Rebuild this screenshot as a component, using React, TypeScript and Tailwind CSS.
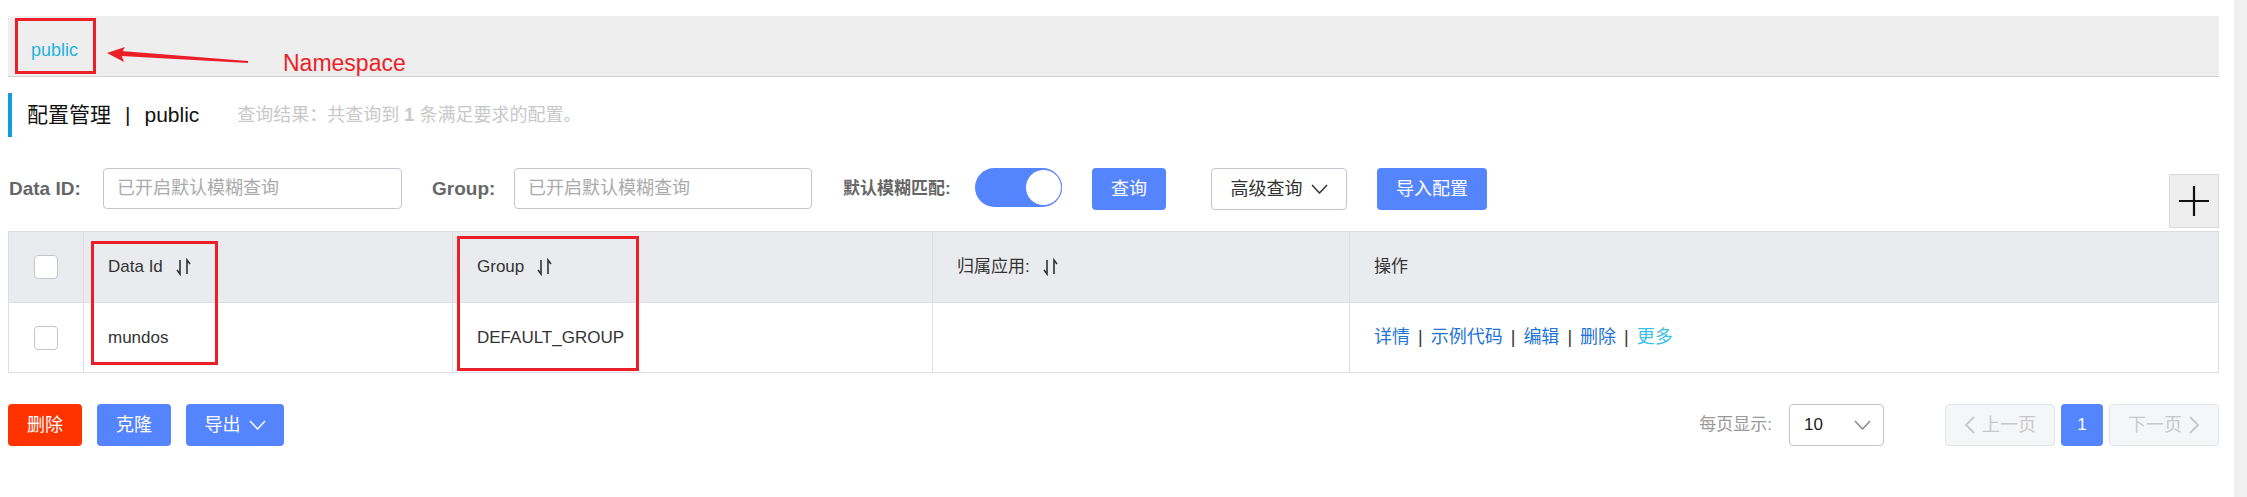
import React from "react";

function SortIcon() {
  return (
    <svg width="17" height="18" viewBox="0 0 17 18" className="ml-[12px] text-[#333]">
      <path d="M5 2 V16 L2 12" fill="none" stroke="currentColor" strokeWidth="1.6" />
      <path d="M12 16 V2 L15 6" fill="none" stroke="currentColor" strokeWidth="1.6" />
    </svg>
  );
}

function Chevron({ color, size = 17 }: { color: string; size?: number }) {
  return (
    <svg width={size} height="10" viewBox="0 0 17 10">
      <polyline points="1,1 8.5,9 16,1" fill="none" stroke={color} strokeWidth="1.5" />
    </svg>
  );
}

function Checkbox() {
  return <div className="w-[24px] h-[24px] rounded-[4px] border border-[#c4c6cf] bg-white" />;
}

export default function App() {
  const actions = [
    { label: "详情", color: "text-[#2374d6]" },
    { label: "示例代码", color: "text-[#2374d6]" },
    { label: "编辑", color: "text-[#2374d6]" },
    { label: "删除", color: "text-[#2374d6]" },
    { label: "更多", color: "text-[#3bbfe6]" },
  ];

  return (
    <div className="flex h-[497px] w-full bg-white font-['Liberation_Sans','Noto_Sans_CJK_SC',sans-serif] text-[#333] overflow-hidden">
      <div className="relative flex-1 flex flex-col pl-[8px] pr-[15px]">
        {/* namespace bar */}
        <div className="relative mt-[16px] h-[61px] bg-[#eeeeee] border-b border-[#cfcfcf] flex items-center pl-[23px] pt-[8px]">
          <span className="text-[18px] text-[#22b2dc]">public</span>
          <div className="absolute left-[7px] top-[2px] w-[81px] h-[56px] border-[3px] border-[#ea1f28]" />
          <svg className="absolute left-[92px] top-[24px]" width="160" height="30" viewBox="0 0 160 30">
            <polygon points="21,11 148,21 148,23 21,16" fill="#ea1f28" />
            <polygon points="7,13 25,7 21,14 24,22" fill="#ea1f28" />
          </svg>
          <span className="absolute left-[275px] top-[36px] text-[23px] leading-[23px] text-[#ea1f28]">Namespace</span>
        </div>

        {/* title */}
        <div className="mt-[16px] h-[44px] border-l-[4px] border-[#0e9fd6] flex items-center pl-[15px]">
          <span className="text-[21px] text-[#111]">配置管理</span>
          <span className="text-[21px] text-[#111] mx-[14px]">|</span>
          <span className="text-[21px] text-[#111]">public</span>
          <span className="ml-[38px] text-[18px] text-[#c8c8c8]">
            查询结果：共查询到 <b>1</b> 条满足要求的配置。
          </span>
        </div>

        {/* filters */}
        <div className="mt-[31px] flex items-start">
          <div className="h-[42px] flex items-center w-[95px] pl-[1px] text-[19px] font-bold text-[#666]">Data ID:</div>
          <input
            className="h-[41px] w-[299px] rounded-[4px] border border-[#c4c6cf] pl-[13px] text-[18px] outline-none placeholder:text-[#aaa]"
            placeholder="已开启默认模糊查询"
          />
          <div className="ml-[30px] h-[42px] flex items-center w-[82px] text-[19px] font-bold text-[#666]">Group:</div>
          <input
            className="h-[41px] w-[298px] rounded-[4px] border border-[#c4c6cf] pl-[13px] text-[18px] outline-none placeholder:text-[#aaa]"
            placeholder="已开启默认模糊查询"
          />
          <div className="ml-[31px] h-[42px] flex items-center w-[132px] text-[17px] font-bold text-[#666]">默认模糊匹配:</div>
          <div className="h-[39px] w-[87px] rounded-full bg-[#5584ff] flex items-center justify-end">
            <div className="h-[37px] w-[37px] rounded-full bg-white border border-[#5584ff]" />
          </div>
          <button className="ml-[30px] h-[42px] w-[74px] rounded-[4px] bg-[#5584ff] text-white text-[18px]">查询</button>
          <button className="ml-[45px] h-[42px] w-[136px] rounded-[4px] border border-[#c4c6cf] bg-white text-[18px] text-[#333] flex items-center justify-center gap-[8px]">
            高级查询
            <Chevron color="#333" />
          </button>
          <button className="ml-[30px] h-[42px] w-[110px] rounded-[4px] bg-[#5584ff] text-white text-[18px]">导入配置</button>
          <div className="ml-auto mt-[6px] h-[54px] w-[50px] bg-[#eeeeee] border border-[#d9d9d9] flex items-center justify-center">
            <svg width="32" height="32" viewBox="0 0 32 32">
              <path d="M16 1 V31 M1 16 H31" stroke="#111" strokeWidth="2.2" />
            </svg>
          </div>
        </div>

        {/* table */}
        <div className="relative mt-[3px] border border-[#dcdee3] text-[17px]">
          <div className="grid grid-cols-[75px_369px_480px_417px_1fr] h-[71px] bg-[#e9ebef] border-b border-[#dcdee3]">
            <div className="border-r border-[#dcdee3] flex items-center justify-center">
              <Checkbox />
            </div>
            <div className="border-r border-[#dcdee3] flex items-center pl-[24px]">
              Data Id
              <SortIcon />
            </div>
            <div className="border-r border-[#dcdee3] flex items-center pl-[24px]">
              Group
              <SortIcon />
            </div>
            <div className="border-r border-[#dcdee3] flex items-center pl-[24px]">
              归属应用:
              <SortIcon />
            </div>
            <div className="flex items-center pl-[24px]">操作</div>
          </div>
          <div className="grid grid-cols-[75px_369px_480px_417px_1fr] h-[69px]">
            <div className="border-r border-[#dcdee3] flex items-center justify-center">
              <Checkbox />
            </div>
            <div className="border-r border-[#dcdee3] flex items-center pl-[24px]">mundos</div>
            <div className="border-r border-[#dcdee3] flex items-center pl-[24px]">DEFAULT_GROUP</div>
            <div className="border-r border-[#dcdee3]" />
            <div className="flex items-center pl-[24px] text-[18px]">
              {actions.map((a, i) => (
                <React.Fragment key={a.label}>
                  {i > 0 && <span className="mx-[8px] text-[#333]">|</span>}
                  <span className={a.color}>{a.label}</span>
                </React.Fragment>
              ))}
            </div>
          </div>
          <div className="absolute left-[82px] top-[9px] w-[127px] h-[124px] border-[3px] border-[#ea1f28]" />
          <div className="absolute left-[448px] top-[4px] w-[182px] h-[135px] border-[3px] border-[#ea1f28]" />
        </div>

        {/* bottom bar */}
        <div className="mt-[31px] flex items-center text-[18px]">
          <button className="h-[42px] w-[74px] rounded-[4px] bg-[#ff3300] text-white">删除</button>
          <button className="ml-[15px] h-[42px] w-[74px] rounded-[4px] bg-[#5584ff] text-white">克隆</button>
          <button className="ml-[15px] h-[42px] w-[98px] rounded-[4px] bg-[#5584ff] text-white flex items-center justify-center gap-[8px]">
            导出
            <Chevron color="#fff" />
          </button>
          <span className="ml-auto text-[17px] text-[#999]">每页显示:</span>
          <div className="ml-[17px] h-[42px] w-[95px] rounded-[4px] border border-[#c4c6cf] flex items-center justify-between pl-[14px] pr-[12px]">
            <span className="text-[17px] text-[#222]">10</span>
            <Chevron color="#888" />
          </div>
          <button className="ml-[61px] h-[42px] w-[110px] rounded-[4px] bg-[#f5f6f8] border border-[#e3e4e8] text-[#c8c8c8] flex items-center justify-center gap-[7px]">
            <svg width="11" height="18" viewBox="0 0 11 18">
              <polyline points="10,1 2,9 10,17" fill="none" stroke="#c8c8c8" strokeWidth="1.8" />
            </svg>
            上一页
          </button>
          <button className="ml-[6px] h-[42px] w-[42px] rounded-[4px] bg-[#5584ff] text-white text-[17px]">1</button>
          <button className="ml-[6px] h-[42px] w-[110px] rounded-[4px] bg-[#f5f6f8] border border-[#e3e4e8] text-[#c8c8c8] flex items-center justify-center gap-[7px]">
            下一页
            <svg width="11" height="18" viewBox="0 0 11 18">
              <polyline points="1,1 9,9 1,17" fill="none" stroke="#c8c8c8" strokeWidth="1.8" />
            </svg>
          </button>
        </div>
      </div>
      <div className="w-[13px] h-full bg-[#f0f0f0]" />
    </div>
  );
}
